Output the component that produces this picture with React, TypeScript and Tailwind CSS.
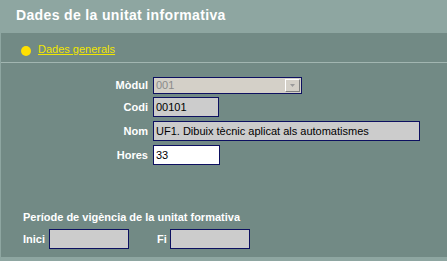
import React from "react";

const font = { fontFamily: '"Liberation Sans", Arial, sans-serif' };

const Label = ({ children }: { children: React.ReactNode }) => (
  <div className="w-[152px] pr-[5px] text-right text-[11px] leading-[13px] font-bold text-white">
    {children}
  </div>
);

const Field = ({
  value,
  width,
  white,
}: {
  value?: string;
  width: string;
  white?: boolean;
}) => (
  <div
    className={`${width} h-[20px] border border-[#0d1060] ${
      white ? "bg-white" : "bg-[#cccccc]"
    } pl-[2px] text-[11px] leading-[18px] text-black whitespace-nowrap overflow-hidden`}
  >
    {value}
  </div>
);

const App = () => {
  return (
    <div className="w-[447px] h-[261px] bg-[#8ea6a1] flex flex-col" style={font}>
      {/* Title */}
      <div className="h-[33px] pl-4 pt-[7px] text-[14px] leading-[17px] font-bold text-white tracking-[0.35px]">
        Dades de la unitat informativa
      </div>

      <div className="flex-1 ml-[1px] mb-[4px] bg-[#728a85] flex flex-col">
        {/* Section link */}
        <div className="h-[30px] border-b border-[#a2b6b1] pl-[20px] pt-[10px] flex items-start gap-[7px]">
          <div className="mt-[3px] w-[10px] h-[10px] rounded-full bg-[#ffe000]" />
          <a className="text-[11px] leading-[13px] text-[#f0e600] underline">Dades generals</a>
        </div>

        {/* Form */}
        <div className="pt-[14px] flex flex-col">
          <div className="flex items-center">
            <Label>Mòdul</Label>
            <div className="w-[149px] h-[17px] border border-[#0d1060] bg-[#d4d0c8] flex items-center">
              <span className="flex-1 pl-[2px] text-[11px] leading-[13px] text-[#8a8a8a]">001</span>
              <div className="w-[15px] h-[13px] mr-[1px] bg-[#d4d0c8] border-t border-l border-white border-r border-b border-r-[#808080] border-b-[#808080] flex items-center justify-center">
                <svg width="7" height="4" viewBox="0 0 7 4">
                  <path d="M1 0h5L3.5 3z" fill="#9a9a9a" />
                </svg>
              </div>
            </div>
          </div>

          <div className="flex items-center mt-[3px]">
            <Label>Codi</Label>
            <Field value="00101" width="w-[66px]" />
          </div>

          <div className="flex items-center mt-[4px]">
            <Label>Nom</Label>
            <Field value="UF1. Dibuix tècnic aplicat als automatismes" width="w-[267px]" />
          </div>

          <div className="flex items-center mt-[4px]">
            <Label>Hores</Label>
            <Field value="33" width="w-[67px]" white />
          </div>
        </div>

        {/* Period */}
        <div className="mt-[46px] pl-[22px] flex flex-col">
          <div className="text-[11px] leading-[13px] font-bold text-white">
            Període de vigència de la unitat formativa
          </div>
          <div className="mt-[5px] flex items-center">
            <span className="text-[11px] leading-[13px] font-bold text-white">Inici</span>
            <div className="ml-[4px]">
              <Field width="w-[80px]" />
            </div>
            <span className="ml-[28px] text-[11px] leading-[13px] font-bold text-white">Fi</span>
            <div className="ml-[3px]">
              <Field width="w-[80px]" />
            </div>
          </div>
        </div>
      </div>
    </div>
  );
};

export default App;
